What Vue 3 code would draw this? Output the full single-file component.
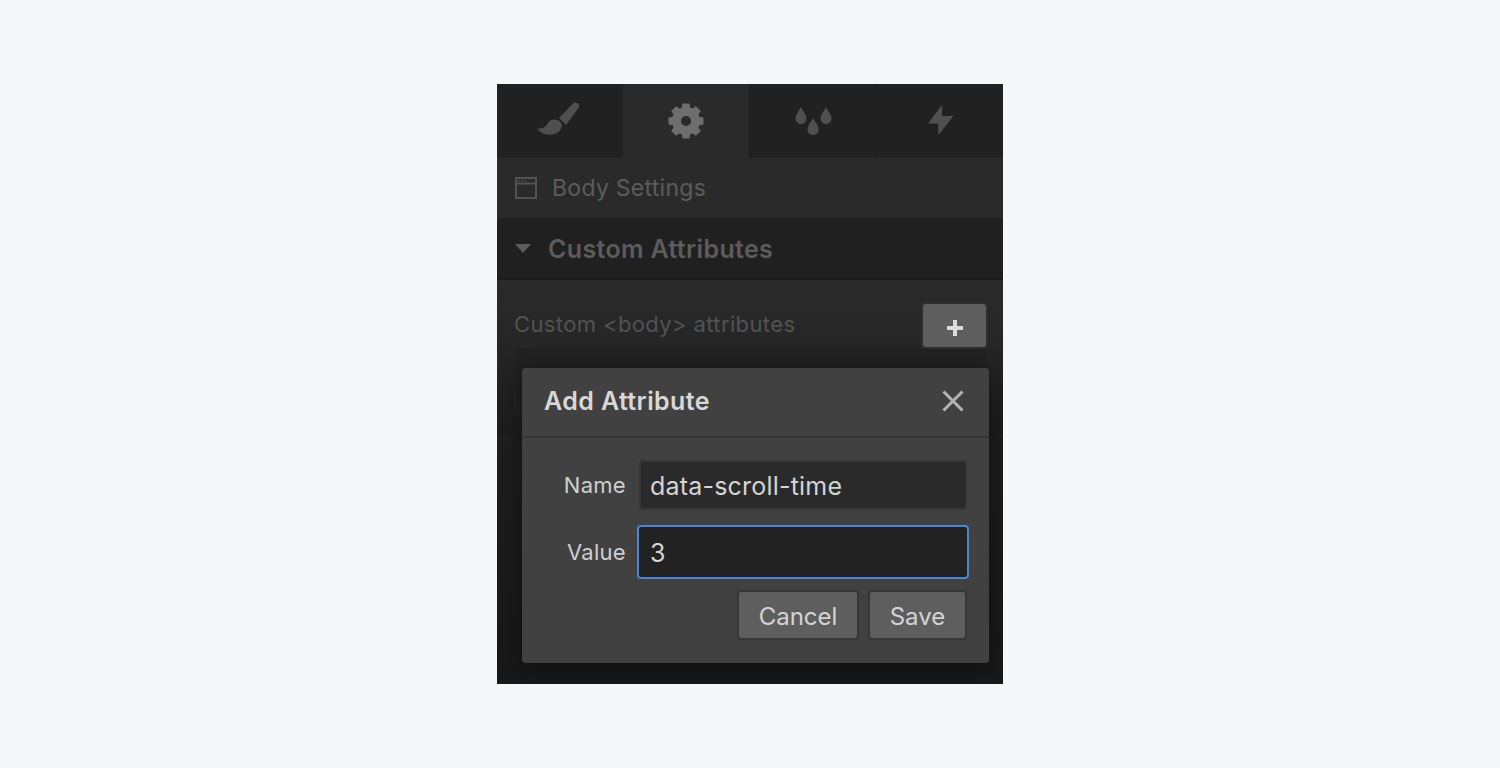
<script setup>
const tabs = ['brush', 'gear', 'drops', 'bolt']
</script>

<template>
  <div class="page">
    <div class="panel">
      <div class="tabs">
        <div v-for="t in tabs" :key="t" class="tab" :class="{ active: t === 'gear' }">
          <svg v-if="t === 'brush'" class="brush" width="44" height="36" viewBox="0 0 44 36">
            <path d="M22 16 L36 1.500 Q38.500 -0.500 41 1.500 Q43 3.500 41.500 6 L29 23 Z" fill="#4f4f4f" />
            <path d="M0 26.500 C6 27 9 24.500 11 21 C14 16.500 20 16.500 23.500 20 C26.500 23 24.500 28 20.500 30.500 C13.500 34.500 5 33 0 26.500 Z" fill="#4f4f4f" />
          </svg>
          <svg v-else-if="t === 'gear'" width="36" height="36" viewBox="0 0 36 36">
            <circle cx="18" cy="18" r="9.500" fill="none" stroke="#6e6e6e" stroke-width="9" />
            <g fill="#6e6e6e">
              <path v-for="a in [0,45,90,135,180,225,270,315]" :key="a" d="M14.500 0.500 H21.500 L22.500 7 H13.500 Z" :transform="`rotate(${a} 18 18)`" />
            </g>
          </svg>
          <svg v-else-if="t === 'drops'" width="38" height="30" viewBox="0 0 38 30">
            <path d="M7 1 C9 5 12.500 9 12.500 12.500 A5.500 5.500 0 0 1 1.500 12.500 C1.500 9 5 5 7 1 Z" fill="#4f4f4f" />
            <path d="M32 1 C34 5 37.500 9 37.500 12.500 A5.500 5.500 0 0 1 26.500 12.500 C26.500 9 30 5 32 1 Z" fill="#4f4f4f" />
            <path d="M19 12 C21 16 24.500 19.500 24.500 23.500 A5.500 5.500 0 0 1 13.500 23.500 C13.500 19.500 17 16 19 12 Z" fill="#4f4f4f" />
          </svg>
          <svg v-else class="bolt" width="28" height="30" viewBox="0 0 28 30">
            <path d="M15 0 L1 18.500 L11 18.500 L11.500 30 L26.500 11 L15 11 Z" fill="#4f4f4f" />
          </svg>
        </div>
      </div>

      <div class="body-row">
        <svg width="22" height="22" viewBox="0 0 22 22">
          <rect x="1" y="1" width="20" height="20" fill="none" stroke="#525252" stroke-width="2" />
          <path d="M1 6.500 H21" stroke="#525252" stroke-width="2" />
          <path d="M3.500 3.800 H5 M6.500 3.800 H8 M9.500 3.800 H11" stroke="#525252" stroke-width="1.500" />
        </svg>
        <span>Body Settings</span>
      </div>

      <div class="section-head">
        <i class="caret"></i>
        <span class="section-title">Custom Attributes</span>
      </div>

      <div class="section-body">
        <div class="attr-row">
          <span>Custom &lt;body&gt; attributes</span>
          <button class="plus" type="button">
            <svg width="18" height="18" viewBox="0 0 18 18"><path d="M9 1 V17 M1 9 H17" stroke="#dcdcdc" stroke-width="4" /></svg>
          </button>
        </div>
        <div class="attr-box"></div>
      </div>

      <div class="panel-rest"></div>

      <div class="modal">
        <div class="modal-head">
          <span>Add Attribute</span>
          <svg width="24" height="24" viewBox="0 0 24 24"><path d="M2.500 2.500 L21.500 21.500 M21.500 2.500 L2.500 21.500" stroke="#b4b4b4" stroke-width="3" /></svg>
        </div>
        <div class="modal-body">
          <div class="field">
            <label>Name</label>
            <div class="input">data-scroll-time</div>
          </div>
          <div class="field focus">
            <label>Value</label>
            <div class="input">3</div>
          </div>
          <div class="actions">
            <button type="button" class="cancel">Cancel</button>
            <button type="button" class="save">Save</button>
          </div>
        </div>
      </div>
    </div>
  </div>
</template>

<style>
html, body { margin: 0; background: #f6f7f9; }
</style>

<style scoped>
.page {
  height: 768px;
  display: flex;
  justify-content: center;
  padding-top: 84px;
  box-sizing: border-box;
  background: #f6f7f9;
  font-family: Inter, "Liberation Sans", sans-serif;
}
.panel {
  position: relative;
  width: 506px;
  height: 600px;
  display: flex;
  flex-direction: column;
  background: #161616;
  overflow: hidden;
}
.tabs {
  display: grid;
  grid-template-columns: 126px 127px 127px 126px;
  height: 74px;
  flex: none;
}
.tab {
  display: flex;
  align-items: center;
  justify-content: center;
  background: #212121;
  border-right: 1px solid #1d1d1d;
  box-sizing: border-box;
}
.tab.active { background: #2a2a2a; border-right: 1px solid #1c1c1c; }
.tab:first-child { border-right: none; }
.tab:last-child { border-right: none; }
.brush { margin-left: -3px; margin-top: -2px; }
.bolt { margin-left: 2px; margin-top: -2px; }
.body-row {
  height: 60px;
  flex: none;
  display: flex;
  align-items: center;
  gap: 15px;
  padding-left: 18px;
  background: #2a2a2a;
  color: #5c5c5c;
  font-size: 23px;
  letter-spacing: 0.28px;
  box-sizing: border-box;
}
.section-head {
  height: 62px;
  flex: none;
  display: flex;
  align-items: center;
  gap: 17px;
  padding-left: 18px;
  background: #202020;
  border-bottom: 2px solid #1b1b1b;
  box-sizing: border-box;
  color: #5c5c5c;
  font-size: 25px;
  font-weight: 600;
  letter-spacing: 0.35px;
}
.section-title { padding-top: 2px; }
.caret {
  width: 0;
  height: 0;
  border-left: 8px solid transparent;
  border-right: 8px solid transparent;
  border-top: 9px solid #5c5c5c;
}
.section-body {
  height: 156px;
  flex: none;
  padding: 20px 15px 0 17px;
  background: linear-gradient(#2a2a2a, #262626 40%, #1c1c1c);
  box-sizing: border-box;
}
.attr-row {
  display: flex;
  justify-content: space-between;
  align-items: center;
  height: 48px;
  color: #525252;
  font-size: 22px;
  letter-spacing: 0.38px;
}
.plus {
  width: 63px;
  height: 43px;
  margin: 3px 2px 0 0;
  padding: 4px 0 0;
  display: flex;
  align-items: center;
  justify-content: center;
  background: #5e5e5e;
  border: none;
  border-radius: 3px;
  box-shadow: 0 0 0 2px #2f2f2f;
}
.attr-box {
  height: 66px;
  border: 1px solid #242424;
  border-radius: 4px;
  background: #212121;
  margin-top: 0;
}
.panel-rest {
  flex: 1;
  background: linear-gradient(#1e1e1e, #181818);
  border-top: 1px solid #242424;
}
.modal {
  position: absolute;
  left: 25px;
  top: 284px;
  width: 467px;
  height: 295px;
  background: #414141;
  border-radius: 4px;
  box-shadow: 0 4px 24px rgba(0, 0, 0, 0.42);
  color: #d8d8d8;
}
.modal-head {
  height: 70px;
  display: flex;
  align-items: center;
  justify-content: space-between;
  padding: 0 24px 2px 22px;
  border-bottom: 2px solid #353535;
  box-sizing: border-box;
  font-size: 25px;
  font-weight: 600;
  letter-spacing: 0.4px;
}
.modal-body {
  padding: 22px 22px 0 0;
}
.field {
  display: flex;
  align-items: center;
  gap: 13px;
  height: 50px;
  margin-bottom: 16px;
  font-size: 22px;
  letter-spacing: 0.3px;
}
.field label {
  width: 104px;
  text-align: right;
  color: #cfcfcf;
}
.input {
  flex: 1;
  height: 50px;
  padding: 2px 0 0 9px;
  display: flex;
  align-items: center;
  background: #2a2a2a;
  border: 2px solid #363636;
  border-radius: 4px;
  box-sizing: border-box;
  font-size: 25px;
  letter-spacing: 0.2px;
  color: #d4d4d4;
}
.field.focus { height: 54px; margin-top: -1px; margin-bottom: 11px; }
.field.focus .input {
  height: 54px;
  margin-left: -2px;
  margin-right: -2px;
  padding-left: 11px;
  background: #222222;
  border-color: #4a86d8;
}
.actions {
  display: flex;
  justify-content: flex-end;
  gap: 9px;
}
.actions button {
  height: 50px;
  padding: 2px 0 0;
  background: #5e5e5e;
  border: 2px solid #363636;
  border-radius: 4px;
  color: #d4d4d4;
  font-family: inherit;
  font-size: 24px;
}
.cancel { width: 122px; }
.save { width: 99px; }
</style>
